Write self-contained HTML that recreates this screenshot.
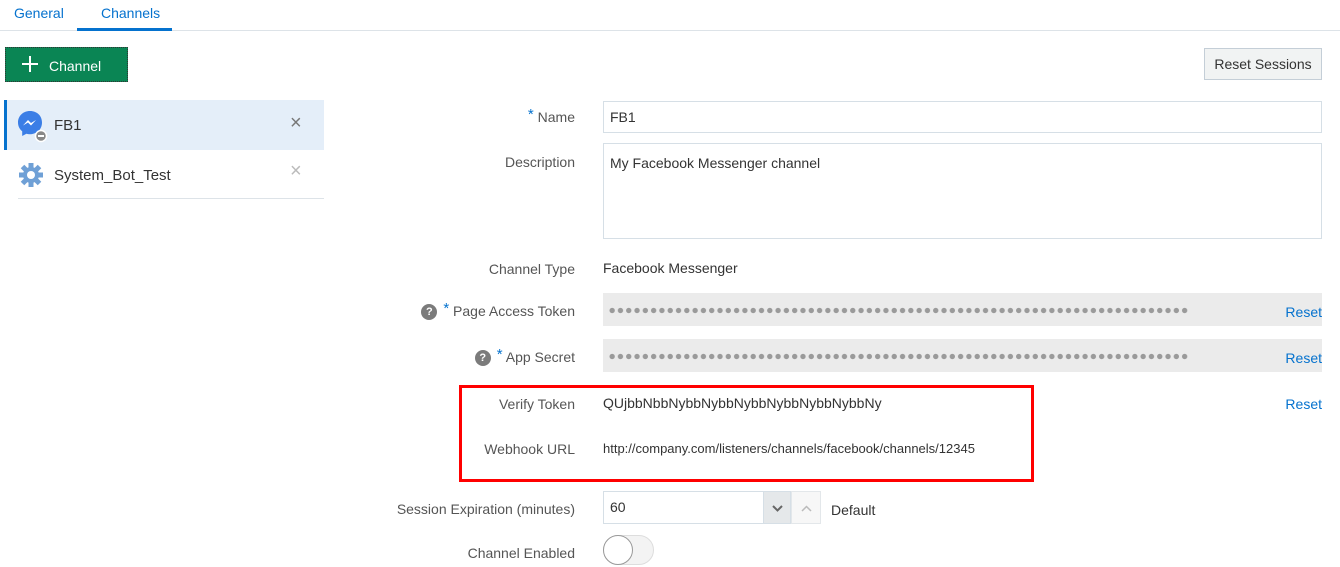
<!DOCTYPE html>
<html><head><style>
body{margin:0;width:1340px;height:567px;background:#fff;font-family:"Liberation Sans",sans-serif;color:#333;position:relative;overflow:hidden;font-size:14px}
.a{position:absolute}
.lbl{position:absolute;right:765px;color:#555;font-size:14px;white-space:nowrap}
.inp{position:absolute;left:603px;width:719px;border:1px solid #d6dfe6;background:#fff;box-sizing:border-box;padding-left:6px}
.ro{position:absolute;left:603px;width:719px;background:#ebebeb;height:33px}
.ro i{position:absolute;left:608px;top:12px;width:581px;height:9px;background:radial-gradient(circle,#9a9a9a 2.4px,transparent 2.9px) 0 0/8.3px 9px repeat-x}
.reset{position:absolute;right:18px;color:#0572ce;font-size:14px}
.star{color:#0572ce;font-size:15px;vertical-align:top;position:relative;top:-3px}
.q{display:inline-block;width:16px;height:16px;border-radius:50%;background:#7b7b7b;color:#fff;font-weight:bold;font-size:11px;text-align:center;line-height:16px;margin-right:6px;vertical-align:middle}
</style></head><body>
<div class="a" style="left:0;top:30px;width:1340px;height:1px;background:#dde3e8"></div>
<div class="a" style="left:14px;top:5px;color:#0572ce;font-size:14px">General</div>
<div class="a" style="left:101px;top:5px;color:#0572ce;font-size:14px">Channels</div>
<div class="a" style="left:77px;top:28px;width:95px;height:3px;background:#0572ce"></div>
<div class="a" style="left:5px;top:47px;width:123px;height:35px;background:#0a8554;border:1px dotted #333;box-sizing:border-box;color:#fff;font-size:14px"><svg class="a" style="left:16px;top:8px" width="16" height="16"><path d="M8 0v16M0 8h16" stroke="#fff" stroke-width="2"/></svg><span style="position:absolute;left:43px;top:10px">Channel</span></div>
<div class="a" style="left:1204px;top:48px;width:118px;height:32px;border:1px solid #c4ced7;background:#f1f3f3;box-sizing:border-box;text-align:center;line-height:30px;font-size:14px;color:#333">Reset Sessions</div>
<div class="a" style="left:4px;top:100px;width:320px;height:50px;background:#e4eef9;border-left:3px solid #0572ce;box-sizing:border-box"></div>
<svg class="a" style="left:17px;top:110px" width="32" height="34" viewBox="0 0 32 34"><path d="M13 1C6 1 1 6 1 12.5c0 3.6 1.6 6.8 4.2 8.8V26l4.2-2.3c1.1.3 2.3.5 3.6.5 7 0 12-5 12-11.7S20 1 13 1z" fill="#3b7ee6"/><path d="M6 15.5l5-5.5 3 3 5-3-5 5.5-3-3z" fill="#fff"/><circle cx="24" cy="26" r="5.5" fill="#888" stroke="#fff" stroke-width="1.5"/><rect x="21" y="25" width="6" height="2" fill="#fff"/></svg>
<div class="a" style="left:54px;top:117px;font-size:15px;color:#333">FB1</div>
<div class="a" style="left:290px;top:112px;font-size:20px;color:#777">×</div>
<svg class="a" style="left:18px;top:162px" width="26" height="26" viewBox="0 0 26 26"><g fill="#6fa0d6"><circle cx="13" cy="13" r="8"/><g stroke="#6fa0d6" stroke-width="5"><path d="M13 1v24M1 13h24M4.5 4.5l17 17M21.5 4.5l-17 17"/></g></g><circle cx="13" cy="13" r="4" fill="#fff"/></svg>
<div class="a" style="left:54px;top:167px;font-size:15px;color:#333">System_Bot_Test</div>
<div class="a" style="left:290px;top:160px;font-size:20px;color:#bbb">×</div>
<div class="a" style="left:18px;top:198px;width:306px;height:1px;background:#dde3e8"></div>

<div class="lbl" style="top:109px"><span class="star">*</span> Name</div>
<div class="inp" style="top:101px;height:32px;line-height:30px">FB1</div>
<div class="lbl" style="top:154px">Description</div>
<div class="inp" style="top:143px;height:96px;padding-top:11px">My Facebook Messenger channel</div>
<div class="lbl" style="top:261px">Channel Type</div>
<div class="a" style="left:603px;top:260px">Facebook Messenger</div>
<div class="lbl" style="top:303px"><span class="q">?</span><span class="star">*</span> Page Access Token</div>
<div class="ro" style="top:293px"></div><i class="a" style="left:608px;top:306px;width:581px;height:9px;background:radial-gradient(circle,#9a9a9a 2.4px,transparent 2.9px) 0 0/8.3px 9px repeat-x"></i>
<div class="reset" style="top:304px">Reset</div>
<div class="lbl" style="top:349px"><span class="q">?</span><span class="star">*</span> App Secret</div>
<div class="ro" style="top:339px"></div><i class="a" style="left:608px;top:352px;width:581px;height:9px;background:radial-gradient(circle,#9a9a9a 2.4px,transparent 2.9px) 0 0/8.3px 9px repeat-x"></i>
<div class="reset" style="top:350px">Reset</div>
<div class="lbl" style="top:396px">Verify Token</div>
<div class="a" style="left:603px;top:395px">QUjbbNbbNybbNybbNybbNybbNybbNybbNy</div>
<div class="reset" style="top:396px">Reset</div>
<div class="lbl" style="top:441px">Webhook URL</div>
<div class="a" style="left:603px;top:441px;font-size:13px">http://company.com/listeners/channels/facebook/channels/12345</div>
<div class="a" style="left:459px;top:385px;width:575px;height:97px;border:3px solid #f00;box-sizing:border-box"></div>
<div class="lbl" style="top:501px">Session Expiration (minutes)</div>
<div class="a" style="left:603px;top:491px;width:218px;height:33px;border:1px solid #d6dfe6;box-sizing:border-box;line-height:31px;padding-left:6px">60</div>
<div class="a" style="left:763px;top:491px;width:28px;height:33px;background:#e5e8ea;border:1px solid #d6dfe6;box-sizing:border-box"><svg class="a" style="left:8px;top:13px" width="11" height="7"><path d="M1 1l4.5 4.5L10 1" stroke="#666" stroke-width="2" fill="none"/></svg></div>
<div class="a" style="left:791px;top:491px;width:30px;height:33px;background:#f7f7f7;border:1px solid #e3e7ea;box-sizing:border-box"><svg class="a" style="left:9px;top:13px" width="11" height="7"><path d="M1 6l4.5-4.5L10 6" stroke="#bbb" stroke-width="1.5" fill="none"/></svg></div>
<div class="a" style="left:831px;top:502px">Default</div>
<div class="lbl" style="top:545px">Channel Enabled</div>
<div class="a" style="left:603px;top:535px;width:51px;height:30px;border-radius:15px;background:#f3f3f3;border:1px solid #ddd;box-sizing:border-box"></div>
<div class="a" style="left:603px;top:535px;width:30px;height:30px;border-radius:15px;background:#fff;border:1px solid #999;box-sizing:border-box"></div>
</body></html>
